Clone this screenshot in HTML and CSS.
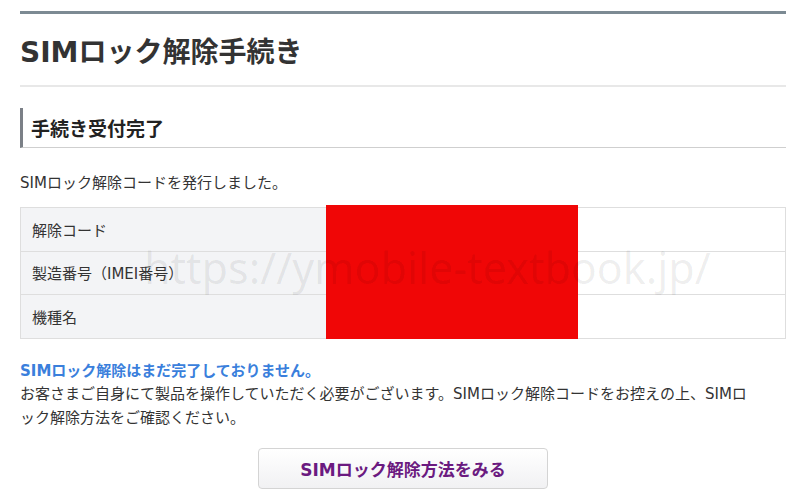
FILE: index.html
```html
<!DOCTYPE html>
<html lang="ja">
<head>
<meta charset="utf-8">
<title>SIMロック解除手続き</title>
<link rel="stylesheet" href="styles.css">
</head>
<body>
<div class="page">
  <div class="topbar"></div>
  <h1 class="title">SIMロック解除手続き</h1>
  <h2 class="section">手続き受付完了</h2>
  <p class="lead">SIMロック解除コードを発行しました。</p>
  <div class="table-wrap">
    <table class="info">
      <tr><th>解除コード</th><td></td></tr>
      <tr><th>製造番号（IMEI番号）</th><td></td></tr>
      <tr><th>機種名</th><td></td></tr>
    </table>
    <div class="redact"></div>
    <div class="watermark">https://ymobile-textbook.jp/</div>
  </div>
  <p class="alert">SIMロック解除はまだ完了しておりません。</p>
  <p class="note">お客さまご自身にて製品を操作していただく必要がございます。SIMロック解除コードをお控えの上、SIMロック解除方法をご確認ください。</p>
  <div class="actions">
    <a class="btn" href="#">SIMロック解除方法をみる</a>
  </div>
</div>
</body>
</html>
```

FILE: styles.css
```css
* { box-sizing: border-box; }
html, body { margin: 0; padding: 0; background: #fff; }
body {
  font-family: "DejaVu Sans", "Noto Sans CJK JP", sans-serif;
  color: #333;
  font-size: 15px;
}
.page {
  padding: 11px 14px 0 20px;
}
.topbar {
  height: 3px;
  background: #7c8a93;
}
.title {
  margin: 0;
  height: 73px;
  display: flex;
  align-items: center;
  font-size: 28px;
  font-weight: bold;
  color: #333;
  border-bottom: 2px solid #e8e8e8;
}
.section {
  margin: 21px 0 0;
  height: 40px;
  display: flex;
  align-items: center;
  padding-left: 8px;
  font-size: 19px;
  font-weight: bold;
  color: #222;
  border-left: 3px solid #7b8087;
  border-bottom: 1px solid #cfcfcf;
}
.lead {
  margin: 23px 0 0;
  line-height: 24px;
}
.table-wrap {
  position: relative;
  margin-top: 12px;
}
.info {
  width: 100%;
  border-collapse: collapse;
}
.info th, .info td {
  border: 1px solid #dedede;
  height: 43.5px;
  padding: 0 11px;
  font-weight: normal;
  text-align: left;
}
.info th {
  width: 306px;
  background: #f3f4f6;
}
.info td { background: #fff; }
.redact {
  position: absolute;
  left: 306px;
  top: -2px;
  width: 252px;
  height: 134px;
  background: #f00606;
}
.watermark {
  position: absolute;
  left: 124px;
  top: 36px;
  font-family: "Noto Sans", sans-serif;
  font-size: 43px;
  line-height: 50px;
  color: rgba(0, 0, 0, 0.07);
  white-space: nowrap;
  pointer-events: none;
}
.alert {
  margin: 22px 0 0;
  line-height: 21px;
  font-weight: bold;
  color: #3a7fdc;
}
.note {
  margin: 0 25px 0 0;
  line-height: 24px;
  line-break: anywhere;
}
.actions {
  display: flex;
  justify-content: center;
  margin-top: 18px;
}
.btn {
  display: flex;
  align-items: center;
  justify-content: center;
  width: 290px;
  height: 41px;
  border: 1px solid #d4d4d4;
  border-radius: 4px;
  background: linear-gradient(#ffffff, #f1f1f3);
  color: #6b1a80;
  font-size: 17px;
  font-weight: bold;
  text-decoration: none;
}
```
